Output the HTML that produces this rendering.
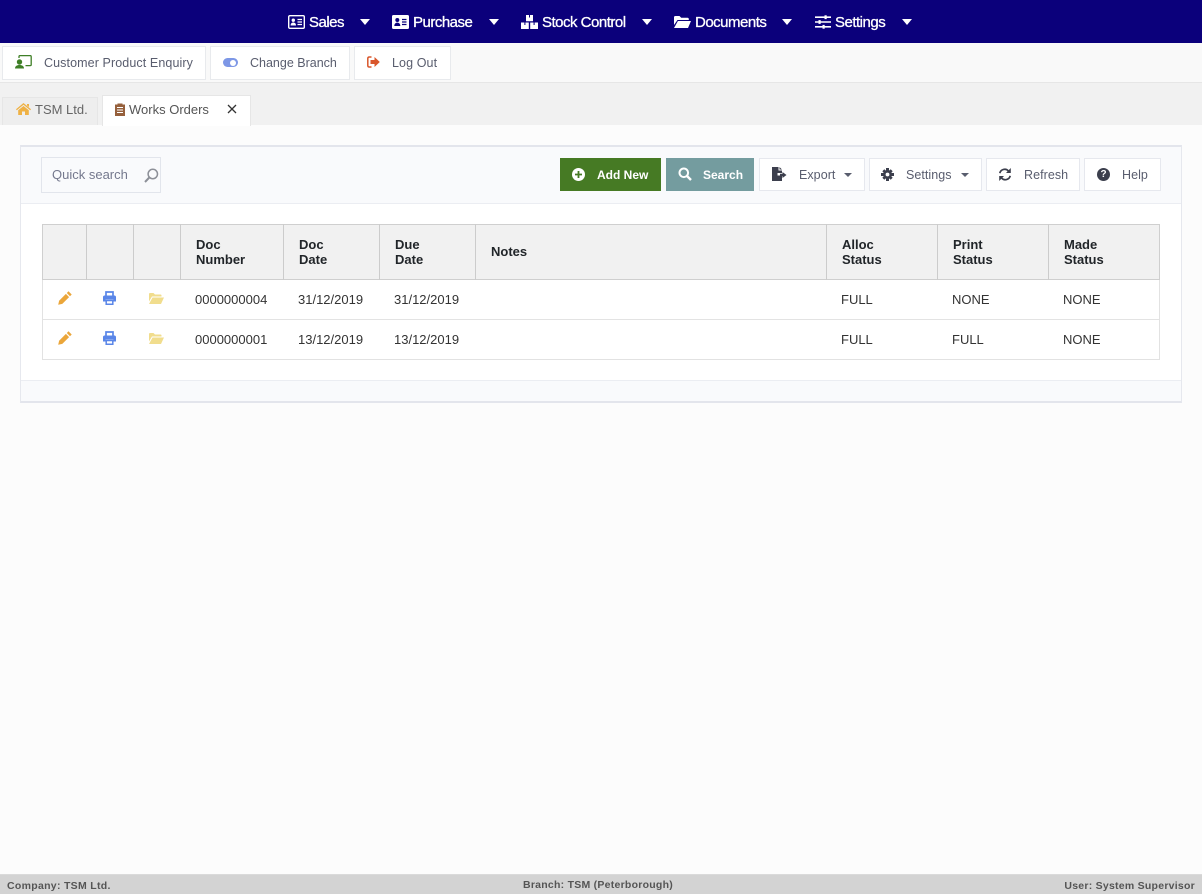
<!DOCTYPE html>
<html><head><meta charset="utf-8"><title>Works Orders</title>
<style>
html,body{margin:0;padding:0}
body{width:1202px;height:894px;overflow:hidden;background:#fcfcfc;position:relative;font-family:"Liberation Sans",sans-serif;color:#333}
div,span,svg{position:absolute;box-sizing:border-box}
.t{white-space:nowrap;line-height:16px}
.nav{color:#fff;font-size:15px;top:15px;-webkit-text-stroke:.3px #fff;letter-spacing:-.5px}
.car{width:0;height:0;border-left:5.5px solid transparent;border-right:5.5px solid transparent;border-top:6px solid #fff;top:19px}
.qb{top:46px;height:34px;background:#fff;border:1px solid #e8eaed}
.qt{top:55px;font-size:12.5px;letter-spacing:.1px;color:#595d6e}
.btn{top:158px;height:33px;background:#fff;border:1px solid #e6e8ee}
.bt{top:167px;font-size:12.5px;color:#595d6e;letter-spacing:.05px}
.hb{font-weight:bold;font-size:13px;line-height:15px;color:#212529;white-space:nowrap;top:237px}
.c{font-size:13px;color:#333;white-space:nowrap;line-height:16px}
.v{width:1px;background:#ccc;top:224px;height:56px}
.car2{width:0;height:0;border-left:4px solid transparent;border-right:4px solid transparent;border-top:4.5px solid #595d6e;top:173px}
</style></head><body>

<div style="left:0;top:0;width:1202px;height:43px;background:#0b007b"></div>
<svg style="left:288px;top:15px" width="17" height="14" viewBox="0 0 17 14"><rect x=".7" y=".7" width="15.6" height="12.6" rx="1.2" fill="none" stroke="#fff" stroke-width="1.4"/><circle cx="5.3" cy="5.2" r="1.7" fill="#fff"/><path d="M2.6 10.5c0-2 1.2-3 2.7-3s2.7 1 2.7 3z" fill="#fff"/><path d="M9.5 4.5h4.5M9.5 7h4.5M9.500 9.500h4.500" stroke="#fff" stroke-width="1.2"/></svg>
<span class="t nav" style="left:309px">Sales</span><div class="car" style="left:360px"></div>
<svg style="left:392px;top:15px" width="17" height="14" viewBox="0 0 17 14"><rect width="17" height="14" rx="1.5" fill="#fff"/><circle cx="5.3" cy="5" r="2" fill="#0b007b"/><path d="M2.3 11c0-2.300 1.300-3.400 3-3.400s3 1.100 3 3.400z" fill="#0b007b"/><path d="M10 4.500h4.500M10 7h4.500M10 9.500h4.500" stroke="#0b007b" stroke-width="1.300"/></svg>
<span class="t nav" style="left:413px">Purchase</span><div class="car" style="left:489px"></div>
<svg style="left:521px;top:15px" width="17" height="14" viewBox="0 0 17 14"><path d="M5 0h7v6.300H5zM0 7.500h7.800V14H0zM9.200 7.500H17V14H9.200z" fill="#fff"/><path d="M8 0h1v2.500H8zM3.400 7.500h1v2.500h-1zM12.600 7.500h1v2.500h-1z" fill="#0b007b"/></svg>
<span class="t nav" style="left:542px">Stock Control</span><div class="car" style="left:642px"></div>
<svg style="left:674px;top:16px" width="17" height="12" viewBox="0 0 17 12"><path d="M0 1.300C0 .5.500 0 1.300 0h4.200l1.700 1.700h6.300c.8 0 1.300.5 1.300 1.300v1H3.500L0 9z" fill="#fff"/><path d="M3.900 5H17l-3 7H0z" fill="#fff"/></svg>
<span class="t nav" style="left:695px">Documents</span><div class="car" style="left:782px"></div>
<svg style="left:815px;top:15px" width="16" height="14" viewBox="0 0 16 14"><path d="M0 2.200h16M0 7h16M0 11.800h16" stroke="#fff" stroke-width="1.600"/><rect x="9.500" y=".3" width="2.200" height="3.800" fill="#fff"/><rect x="3.500" y="5.100" width="2.200" height="3.800" fill="#fff"/><rect x="7.500" y="9.900" width="2.200" height="3.800" fill="#fff"/></svg>
<span class="t nav" style="left:835px">Settings</span><div class="car" style="left:902px"></div>

<div style="left:0;top:43px;width:1202px;height:40px;background:#f9f9f9;border-bottom:1px solid #e6e6e6"></div>
<div class="qb" style="left:2px;width:204px"></div>
<svg style="left:15px;top:55px" width="17" height="14" viewBox="0 0 17 14"><path d="M4 3V1.500C4 1 4.500.6 5 .6h10.200c.6 0 1 .4 1 1v8c0 .6-.4 1-1 1H10.500" fill="none" stroke="#3f7f27" stroke-width="1.300"/><circle cx="4.500" cy="7" r="2.700" fill="#3f7f27"/><path d="M0 13.500c0-2.300 1.800-3.500 4.500-3.500s4.500 1.200 4.500 3.500z" fill="#3f7f27"/></svg>
<span class="t qt" style="left:44px">Customer Product Enquiry</span>
<div class="qb" style="left:210px;width:140px"></div>
<div style="left:223px;top:58px;width:15px;height:9px;border-radius:5px;background:#7d97e6"></div><div style="left:229.500px;top:59.500px;width:6px;height:6px;border-radius:50%;background:#fff"></div>
<span class="t qt" style="left:250px;letter-spacing:0">Change Branch</span>
<div class="qb" style="left:354px;width:97px"></div>
<svg style="left:367px;top:56px" width="13" height="12" viewBox="0 0 13 12"><path d="M4.500 1H2.300C1.300 1 .8 1.600.8 2.500v7c0 .9.500 1.500 1.500 1.500h2.200" fill="none" stroke="#d9562b" stroke-width="1.500"/><path d="M7.500 1l5.300 5-5.300 5V8H3.500V4h4z" fill="#d9562b"/></svg>
<span class="t qt" style="left:392px">Log Out</span>

<div style="left:0;top:83px;width:1202px;height:42px;background:#f1f1f1"></div>
<div style="left:2px;top:97px;width:96px;height:28px;background:#eeeeee;border:1px solid #e6e6e6;border-bottom:0"></div>
<svg style="left:16px;top:103px" width="15" height="12" viewBox="0 0 15 12"><path d="M7.500 0L15 6.300l-.8 1L7.500 1.800.8 7.300 0 6.300zM2.200 7.300L7.500 3l5.300 4.300V12H9V8.500H6V12H2.200zM11 1h2v3l-2-1.500z" fill="#efb144"/></svg>
<span class="t" style="left:35px;top:102px;font-size:13px;color:#666">TSM Ltd.</span>
<div style="left:102px;top:95px;width:149px;height:31px;background:#fff;border:1px solid #e6e6e6;border-bottom:0"></div>
<svg style="left:115px;top:103px" width="10" height="13" viewBox="0 0 10 13"><path d="M0 1.500h2.500V.500h5v1H10V13H0z" fill="#96603c"/><path d="M2 4.500h6M2 7h6M2 9.500h6" stroke="#fff" stroke-width="1.100"/></svg>
<span class="t" style="left:129px;top:102px;font-size:13px;color:#555">Works Orders</span>
<svg style="left:227px;top:104px" width="10" height="10" viewBox="0 0 10 10"><path d="M1 1l8 8M9 1L1 9" stroke="#333" stroke-width="1.300"/></svg>

<div style="left:20px;top:145px;width:1162px;height:258px;background:#fff;border:1px solid #e6e8ee;border-top:2px solid #e3e5ec;border-bottom:2px solid #e3e5ec"></div>
<div style="left:21px;top:147px;width:1160px;height:57px;background:#f9fafc;border-bottom:1px solid #ebedf2"></div>
<div style="left:21px;top:380px;width:1160px;height:21px;background:#f9fafc;border-top:1px solid #ebedf2"></div>

<div style="left:41px;top:157px;width:120px;height:36px;background:#f9fafc;border:1px solid #e2e5ec"></div>
<span class="t" style="left:52px;top:167px;font-size:13px;color:#74788d">Quick search</span>
<svg style="left:143px;top:167px" width="17" height="17" viewBox="0 0 17 17"><circle cx="9.800" cy="7" r="4.700" fill="none" stroke="#8d9098" stroke-width="1.500"/><path d="M6.300 10.500L2 15" stroke="#8d9098" stroke-width="2"/></svg>

<div style="left:560px;top:158px;width:101px;height:33px;background:#467a24"></div>
<svg style="left:572px;top:168px" width="13" height="13" viewBox="0 0 13 13"><circle cx="6.500" cy="6.500" r="6.500" fill="#fff"/><path d="M6.500 3v7M3 6.500h7" stroke="#467a24" stroke-width="1.800"/></svg>
<span class="t" style="left:597px;top:167px;font-size:12px;font-weight:bold;color:#fff">Add New</span>
<div style="left:666px;top:158px;width:88px;height:33px;background:#749c9f"></div>
<svg style="left:678px;top:167px" width="14" height="14" viewBox="0 0 14 14"><circle cx="5.800" cy="5.800" r="4.300" fill="none" stroke="#fff" stroke-width="2"/><path d="M9 9l4 4" stroke="#fff" stroke-width="2.400"/></svg>
<span class="t" style="left:703px;top:167px;font-size:12px;font-weight:bold;color:#fff">Search</span>

<div class="btn" style="left:759px;width:106px"></div>
<svg style="left:772px;top:167px" width="15" height="14" viewBox="0 0 15 14"><path d="M0 0h6.500v3.500H10V6H5.500v2.500H10V14H0zM7.500 0L10 2.500H7.500z" fill="#3c3f4d"/><path d="M10.500 5l4 3-4 3V9.300H8V6.800h2.500z" fill="#3c3f4d"/></svg>
<span class="t bt" style="left:799px">Export</span><div class="car2" style="left:844px"></div>
<div class="btn" style="left:869px;width:113px"></div>
<svg style="left:881px;top:168px" width="13" height="13" viewBox="0 0 13 13"><path d="M6.500 2a4.500 4.500 0 1 0 0 9 4.500 4.500 0 0 0 0-9zm0 2.600a1.900 1.900 0 1 1 0 3.800 1.900 1.900 0 0 1 0-3.800z" fill="#3c3f4d" fill-rule="evenodd"/><path d="M5 0h3v2.500H5zM5 10.500h3V13H5zM0 5h2.500v3H0zM10.500 5H13v3h-2.500zM1.300 3.200l2-2 1.500 1.500-2 2zM9.700 1.200l2 2-1.500 1.500-2-2zM1.300 9.800l2 2 1.500-1.500-2-2zM11.700 9.800l-2 2-1.500-1.500 2-2z" fill="#3c3f4d"/></svg>
<span class="t bt" style="left:906px">Settings</span><div class="car2" style="left:961px"></div>
<div class="btn" style="left:986px;width:94px"></div>
<svg style="left:998px;top:168px" width="14" height="13" viewBox="0 0 14 13"><path d="M1.800 5.200a5 5 0 0 1 8.700-2.100" fill="none" stroke="#3c3f4d" stroke-width="1.700"/><path d="M12.200 7.800a5 5 0 0 1-8.700 2.100" fill="none" stroke="#3c3f4d" stroke-width="1.700"/><path d="M12.800 0v5H8zM1.200 13V8H6z" fill="#3c3f4d"/></svg>
<span class="t bt" style="left:1024px">Refresh</span>
<div class="btn" style="left:1084px;width:77px"></div>
<div style="left:1097px;top:168px;width:13px;height:13px;border-radius:50%;background:#3c3f4d;color:#fff;font-size:10px;font-weight:bold;line-height:13px;text-align:center">?</div>
<span class="t bt" style="left:1122px">Help</span>

<div style="left:42px;top:224px;width:1118px;height:136px;background:#fff;border:1px solid #e2e2e2;border-top:0"></div>
<div style="left:42px;top:224px;width:1118px;height:56px;background:#f1f1f1;border:1px solid #cfcfcf"></div>
<div class="v" style="left:86px"></div><div class="v" style="left:133px"></div><div class="v" style="left:180px"></div><div class="v" style="left:283px"></div><div class="v" style="left:379px"></div><div class="v" style="left:475px"></div><div class="v" style="left:826px"></div><div class="v" style="left:937px"></div><div class="v" style="left:1048px"></div>
<div style="left:43px;top:319px;width:1116px;height:1px;background:#e3e3e3"></div>

<span class="hb" style="left:196px">Doc<br>Number</span>
<span class="hb" style="left:299px">Doc<br>Date</span>
<span class="hb" style="left:395px">Due<br>Date</span>
<span class="hb" style="left:491px;top:244px">Notes</span>
<span class="hb" style="left:842px">Alloc<br>Status</span>
<span class="hb" style="left:953px">Print<br>Status</span>
<span class="hb" style="left:1064px">Made<br>Status</span>

<svg style="left:58px;top:291px" width="14" height="14" viewBox="0 0 14 14"><path d="M10.500.3l3.200 3.200-1.700 1.700-3.200-3.200z" fill="#eba63a"/><path d="M7.900 2.900l3.200 3.200-6.800 6.800L.2 13.800l.9-4.100z" fill="#eba63a"/></svg>
<svg style="left:103px;top:291px" width="13" height="14" viewBox="0 0 13 14"><path d="M3 5V1h7v4" fill="none" stroke="#5a86e8" stroke-width="1.700"/><path d="M1.500 4.500h10c.8 0 1.500.7 1.500 1.500v4.500h-2.500V8.500h-8v2H0V6c0-.8.700-1.500 1.500-1.500z" fill="#5a86e8"/><path d="M3.200 9.500h6.600v3.800H3.200z" fill="none" stroke="#5a86e8" stroke-width="1.500"/></svg>
<svg style="left:149px;top:293px" width="15" height="11" viewBox="0 0 15 11"><path d="M0 1c0-.6.400-1 1-1h3.500L6 1.500h5.500c.6 0 1 .4 1 1V3.500H3L0 8.500z" fill="#f1dd8d"/><path d="M3.500 4.500H15L12 11H0z" fill="#f1dd8d"/></svg>
<span class="c" style="left:195px;top:292px">0000000004</span>
<span class="c" style="left:298px;top:292px">31/12/2019</span>
<span class="c" style="left:394px;top:292px">31/12/2019</span>
<span class="c" style="left:841px;top:292px">FULL</span>
<span class="c" style="left:952px;top:292px">NONE</span>
<span class="c" style="left:1063px;top:292px">NONE</span>

<svg style="left:58px;top:331px" width="14" height="14" viewBox="0 0 14 14"><path d="M10.500.3l3.200 3.200-1.700 1.700-3.200-3.200z" fill="#eba63a"/><path d="M7.900 2.900l3.200 3.200-6.800 6.800L.2 13.800l.9-4.100z" fill="#eba63a"/></svg>
<svg style="left:103px;top:331px" width="13" height="14" viewBox="0 0 13 14"><path d="M3 5V1h7v4" fill="none" stroke="#5a86e8" stroke-width="1.700"/><path d="M1.500 4.500h10c.8 0 1.500.7 1.500 1.500v4.500h-2.500V8.500h-8v2H0V6c0-.8.700-1.500 1.500-1.500z" fill="#5a86e8"/><path d="M3.200 9.500h6.600v3.800H3.200z" fill="none" stroke="#5a86e8" stroke-width="1.500"/></svg>
<svg style="left:149px;top:333px" width="15" height="11" viewBox="0 0 15 11"><path d="M0 1c0-.6.400-1 1-1h3.500L6 1.500h5.500c.6 0 1 .4 1 1V3.500H3L0 8.500z" fill="#f1dd8d"/><path d="M3.500 4.500H15L12 11H0z" fill="#f1dd8d"/></svg>
<span class="c" style="left:195px;top:332px">0000000001</span>
<span class="c" style="left:298px;top:332px">13/12/2019</span>
<span class="c" style="left:394px;top:332px">13/12/2019</span>
<span class="c" style="left:841px;top:332px">FULL</span>
<span class="c" style="left:952px;top:332px">FULL</span>
<span class="c" style="left:1063px;top:332px">NONE</span>

<div style="left:0;top:874px;width:1202px;height:20px;background:#d3d3d3;border-top:1px solid #dadada"></div>
<span class="t" style="left:7px;top:878px;font-size:10.500px;font-weight:bold;color:#555;letter-spacing:.3px">Company: TSM Ltd.</span>
<span class="t" style="left:523px;top:877px;font-size:10.500px;font-weight:bold;color:#555;letter-spacing:.25px">Branch: TSM (Peterborough)</span>
<span class="t" style="right:7px;top:878px;font-size:10.500px;font-weight:bold;color:#555;letter-spacing:.25px">User: System Supervisor</span>
</body></html>
